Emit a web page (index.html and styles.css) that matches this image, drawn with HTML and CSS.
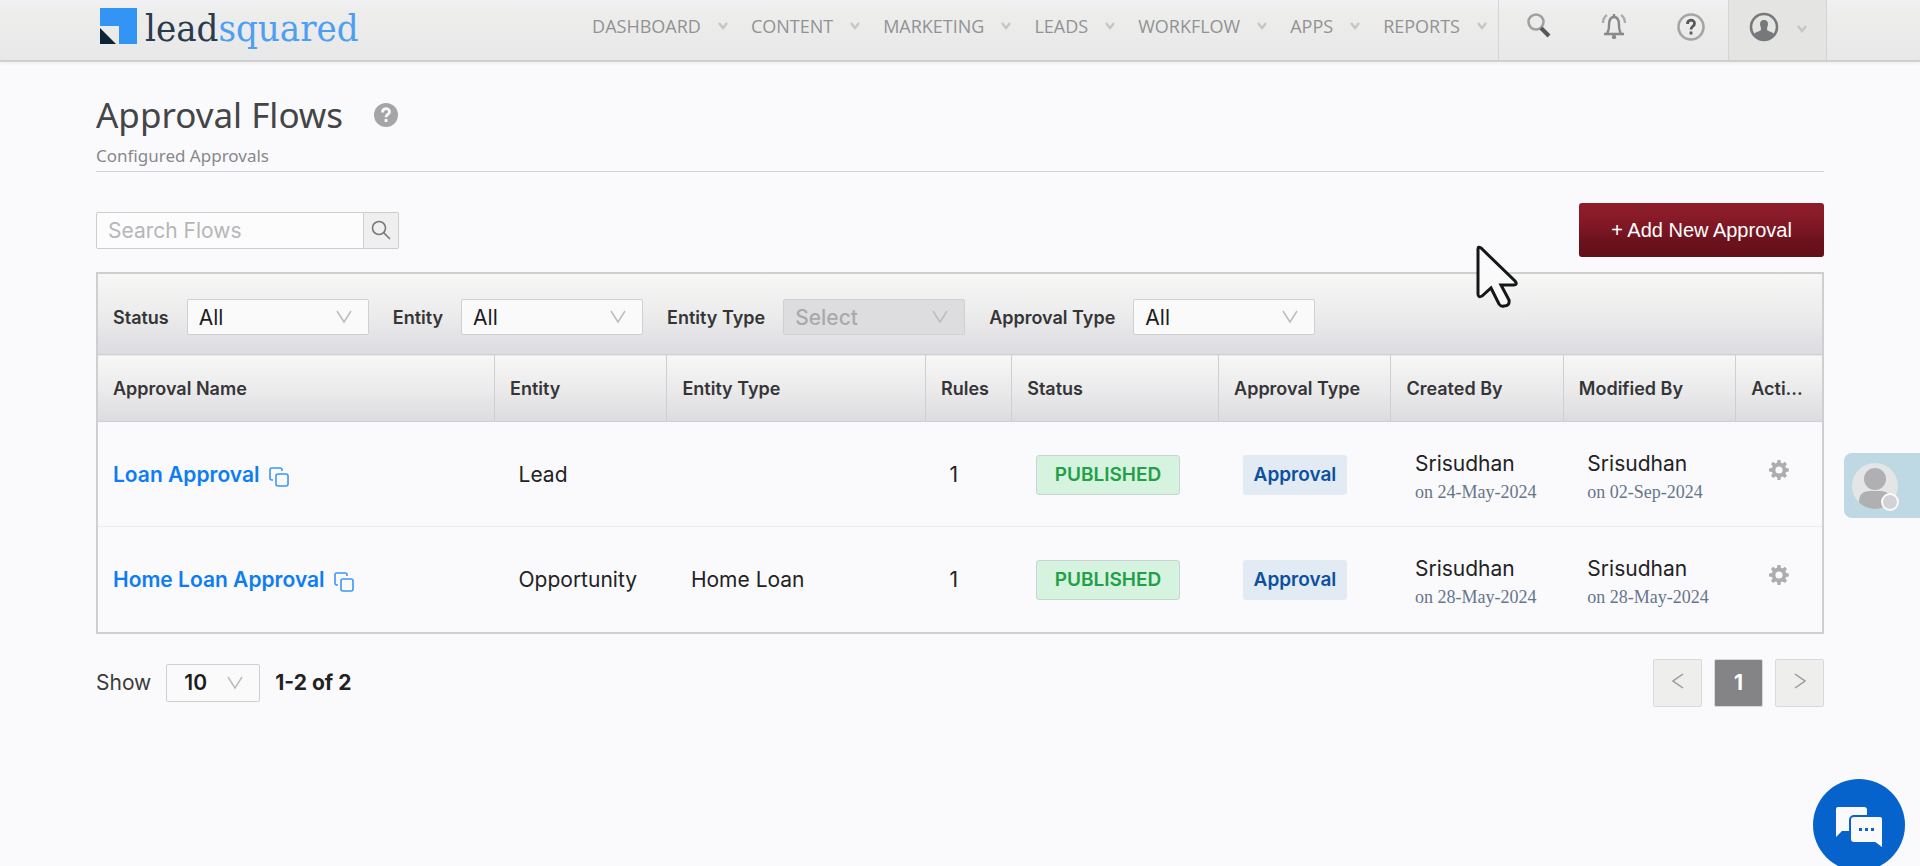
FILE: index.html
```html
<!DOCTYPE html>
<html lang="en">
<head>
    <meta charset="UTF-8">
    <meta name="viewport" content="width=device-width, initial-scale=1.0">
    <title>Approval Flows</title>
    <link rel="stylesheet" href="styles.css">
</head>
<body>

    <!-- Shared icon shapes -->
    <svg class="sprite" aria-hidden="true">
        <symbol id="caret" viewBox="0 0 10 8"><path d="M1 1l4 5 4-5" fill="none" stroke="#c6c6c8" stroke-width="2.4"/></symbol>
        <symbol id="chevron" viewBox="0 0 16 14"><path d="M1 1l7 11 7-11" fill="none" stroke="#bcbcbe" stroke-width="1.5"/></symbol>
        <symbol id="copy" viewBox="0 0 20 20"><g fill="none" stroke="#3d97f7" stroke-width="1.6"><rect x="7" y="7" width="12" height="12" rx="2"/><path d="M4 13H3a2 2 0 0 1-2-2V3a2 2 0 0 1 2-2h8a2 2 0 0 1 2 2v1"/></g></symbol>
        <symbol id="gear" viewBox="0 0 20 20"><path fill-rule="evenodd" fill="#adadb0" d="M8.500 0h3l.4 2.700 1.700.7 2.200-1.600 2.200 2.100-1.600 2.300.7 1.700 2.700.5v3l-2.700.5-.7 1.700 1.600 2.200-2.200 2.200-2.200-1.600-1.700.7-.4 2.900h-3l-.5-2.900-1.600-.7-2.300 1.600L2 15.800l1.600-2.200-.7-1.700-2.900-.5v-3l2.900-.5.7-1.700L2 3.900l2.100-2.100 2.300 1.600 1.600-.7zM10 6.400a3.600 3.600 0 1 0 0 7.200 3.600 3.600 0 0 0 0-7.200z"/></symbol>
    </svg>

    <header class="topbar">
        <a class="logo" href="#" aria-label="leadsquared">
            <svg width="37" height="36" viewBox="0 0 37 36"><path fill="#3294f5" d="M0 0h37v36H19V18H0z"/><path fill="#0c2438" d="M0 20l16 16H0z"/></svg>
            <span class="logo-text">lead<span class="logo-blue">squared</span></span>
        </a>
        <nav class="menu">
            <a href="#">DASHBOARD <svg class="caret"><use href="#caret"/></svg></a>
            <a href="#">CONTENT <svg class="caret"><use href="#caret"/></svg></a>
            <a href="#">MARKETING <svg class="caret"><use href="#caret"/></svg></a>
            <a href="#">LEADS <svg class="caret"><use href="#caret"/></svg></a>
            <a href="#">WORKFLOW <svg class="caret"><use href="#caret"/></svg></a>
            <a href="#">APPS <svg class="caret"><use href="#caret"/></svg></a>
            <a href="#">REPORTS <svg class="caret"><use href="#caret"/></svg></a>
        </nav>
        <div class="tools">
            <button type="button" aria-label="Search">
                <svg width="26" height="26" viewBox="0 0 26 26" fill="none"><circle cx="11" cy="9" r="7.500" stroke="#a0a0a2" stroke-width="2.600"/><path d="M16 15l8 8" stroke="#555759" stroke-width="4"/></svg>
            </button>
            <button type="button" aria-label="Notifications">
                <svg width="26" height="26" viewBox="0 0 26 26" fill="none" stroke="#88898b" stroke-width="2.400"><path d="M3 21h20M6 20c2-2 2-4 2-8 0-5 2-8 5-8s5 3 5 8c0 4 0 6 2 8M13 1v3"/><path d="M6 2C3 4 2 7 2 10M20 2c3 2 4 5 4 8" stroke="#acadb0"/><circle cx="13" cy="24" r="1"/></svg>
            </button>
            <button type="button" aria-label="Help">
                <svg width="28" height="28" viewBox="0 0 28 28" fill="none"><circle cx="14" cy="14" r="12.500" stroke="#a4a5a7" stroke-width="2.600"/><path d="M10.500 11c0-5 7-5 7-.5 0 3-3.500 2.500-3.500 6M14 18.500v3" stroke="#58595b" stroke-width="2.800"/></svg>
            </button>
        </div>
        <button type="button" class="account" aria-label="Account">
            <svg width="30" height="30" viewBox="0 0 30 30"><circle cx="15" cy="15" r="13" fill="none" stroke="#77787b" stroke-width="2.600"/><path fill="#77787b" d="M15 8c3 0 4 2 4 4 0 2-1 3-1 5 0 3 5 2 7 5-5 8-15 8-20 0 2-3 7-2 7-5 0-2-1-3-1-5 0-2 1-4 4-4z"/></svg>
            <svg class="caret"><use href="#caret"/></svg>
        </button>
    </header>

    <main class="page">
        <div class="page-title">
            <h1>Approval Flows</h1>
            <svg width="24" height="24" viewBox="0 0 24 24" fill="none"><circle cx="12" cy="12" r="12" fill="#a5a5a8"/><path d="M8.500 9.500c0-5 7-5 7-.5 0 2.500-3.500 2.500-3.500 5.200M12 16v3" stroke="#fafafc" stroke-width="2.800"/></svg>
        </div>
        <p class="subtitle">Configured Approvals</p>

        <div class="actions">
            <form class="search">
                <input type="text" placeholder="Search Flows" aria-label="Search Flows">
                <button type="button" aria-label="Search">
                    <svg width="20" height="20" viewBox="0 0 20 20" fill="none" stroke="#77777a" stroke-width="1.600"><circle cx="8" cy="8" r="6.500"/><path d="M12.500 12.500L19 19"/></svg>
                </button>
            </form>
            <button type="button" class="add-btn">+ Add New Approval</button>
        </div>

        <section class="grid-box">
            <div class="filters">
                <label for="status">Status</label>
                <div class="select">
                    <select id="status"><option>All</option></select>
                    <svg class="chevron"><use href="#chevron"/></svg>
                </div>
                <label for="entity">Entity</label>
                <div class="select">
                    <select id="entity"><option>All</option></select>
                    <svg class="chevron"><use href="#chevron"/></svg>
                </div>
                <label for="entityType">Entity Type</label>
                <div class="select">
                    <select id="entityType" disabled><option>Select</option></select>
                    <svg class="chevron"><use href="#chevron"/></svg>
                </div>
                <label for="approvalType">Approval Type</label>
                <div class="select">
                    <select id="approvalType"><option>All</option></select>
                    <svg class="chevron"><use href="#chevron"/></svg>
                </div>
            </div>

            <table class="flows">
                <colgroup>
                    <col class="col-name">
                    <col class="col-medium">
                    <col class="col-type">
                    <col class="col-small">
                    <col class="col-status">
                    <col class="col-medium">
                    <col class="col-medium">
                    <col class="col-medium">
                    <col>
                </colgroup>
                <thead>
                    <tr>
                        <th>Approval Name</th>
                        <th>Entity</th>
                        <th>Entity Type</th>
                        <th>Rules</th>
                        <th>Status</th>
                        <th>Approval Type</th>
                        <th>Created By</th>
                        <th>Modified By</th>
                        <th>Acti...</th>
                    </tr>
                </thead>
                <tbody>
                    <tr>
                        <td><div class="name"><a href="#">Loan Approval</a><svg class="copy"><use href="#copy"/></svg></div></td>
                        <td>Lead</td>
                        <td></td>
                        <td>1</td>
                        <td><span class="badge published">PUBLISHED</span></td>
                        <td><span class="badge type">Approval</span></td>
                        <td class="person">Srisudhan<span class="date">on 24-May-2024</span></td>
                        <td class="person">Srisudhan<span class="date">on 02-Sep-2024</span></td>
                        <td class="action"><button type="button" aria-label="Actions"><svg class="gear"><use href="#gear"/></svg></button></td>
                    </tr>
                    <tr>
                        <td><div class="name"><a href="#">Home Loan Approval</a><svg class="copy"><use href="#copy"/></svg></div></td>
                        <td>Opportunity</td>
                        <td>Home Loan</td>
                        <td>1</td>
                        <td><span class="badge published">PUBLISHED</span></td>
                        <td><span class="badge type">Approval</span></td>
                        <td class="person">Srisudhan<span class="date">on 28-May-2024</span></td>
                        <td class="person">Srisudhan<span class="date">on 28-May-2024</span></td>
                        <td class="action"><button type="button" aria-label="Actions"><svg class="gear"><use href="#gear"/></svg></button></td>
                    </tr>
                </tbody>
            </table>
        </section>

        <footer class="pager">
            <label for="pageSize">Show</label>
            <div class="select page-size">
                <select id="pageSize"><option>10</option></select>
                <svg class="chevron"><use href="#chevron"/></svg>
            </div>
            <strong>1-2 of 2</strong>
            <div class="pages">
                <button type="button" aria-label="Previous"><svg width="12" height="16" viewBox="0 0 12 16"><path d="M11 1L1 8l10 7" fill="none" stroke="#98989b" stroke-width="1.500"/></svg></button>
                <button type="button" class="current">1</button>
                <button type="button" aria-label="Next"><svg width="12" height="16" viewBox="0 0 12 16"><path d="M1 1l10 7-10 7" fill="none" stroke="#98989b" stroke-width="1.500"/></svg></button>
            </div>
        </footer>
    </main>

    <!-- Floating items -->
    <button type="button" class="agent" aria-label="Agent status">
        <svg width="52" height="52" viewBox="0 0 52 52"><defs><clipPath id="face"><circle cx="25" cy="25" r="23"/></clipPath></defs><circle cx="25" cy="25" r="23" fill="#e4e5e6"/><g clip-path="url(#face)" fill="#b0b0b3"><circle cx="25" cy="18" r="11"/><path d="M9 48V41q0-11 11-11h10q11 0 11 11v7z"/></g><circle cx="40" cy="41" r="8" fill="#d2d2d5" stroke="#fafafc" stroke-width="2"/></svg>
    </button>

    <button type="button" class="chat" aria-label="Chat">
        <svg width="50" height="46" viewBox="0 0 50 46"><path fill="#fafafc" d="M4 2h26a3 3 0 0 1 3 3v21H8l-6 6V4a2 2 0 0 1 2-2z"/><path fill="#fafafc" stroke="#0663cc" stroke-width="2" d="M20 11h26a3 3 0 0 1 3 3v30l-8-6H20a4 4 0 0 1-4-4V15a4 4 0 0 1 4-4z"/><path fill="#0663cc" d="M25 23h3v3h-3zM31 23h3v3h-3zM37 23h3v3h-3z"/></svg>
    </button>

    <svg class="pointer" width="42" height="64" viewBox="0 0 42 64" aria-hidden="true"><path d="M2 4Q2 1 5 3L39 36Q42 40 38 40H25L33 55Q34 61 28 61Q25 62 23 59L15 43L6 51Q2 53 2 49z" fill="#fafafa" stroke="#151719" stroke-width="3"/></svg>

</body>
</html>
```
FILE: styles.css
```css
* {
    box-sizing: border-box;
}

body {
    font-family: Inter, "Liberation Sans", sans-serif;
    font-size: 21px;
    color: #222224;
    background-color: #fafafc;
    margin: 0;
    min-height: 100vh;
}

a {
    text-decoration: none;
}

button {
    font-family: inherit;
    cursor: pointer;
    padding: 0;
    border: none;
    background: none;
}

svg {
    flex: none;
}

.sprite {
    display: none;
}

/* Top bar */
.topbar {
    display: flex;
    align-items: stretch;
    height: 62px;
    padding: 0 93px 0 100px;
    background: linear-gradient(#f1f1f3, #ededeb 20%, #e8e8ea);
    border-bottom: 2px solid #cfcfcf;
    box-shadow: 0 2px 3px #f1f1f1;
}

.logo {
    display: flex;
    align-items: flex-start;
    gap: 8px;
    padding-top: 8px;
}

.logo-text {
    font-family: "DejaVu Serif Condensed", "DejaVu Serif", serif;
    font-size: 38px;
    line-height: 40px;
    color: #2a3b4d;
}

.logo-blue {
    color: #4c9ff2;
}

.menu {
    display: flex;
    gap: 23px;
    margin-left: auto;
    padding-right: 11px;
}

.menu a {
    display: flex;
    align-items: center;
    gap: 17px;
    height: 52px;
    font-family: "Open Sans", "Noto Sans", sans-serif;
    font-size: 18px;
    color: #929294;
}

.caret {
    width: 10px;
    height: 8px;
}

.tools {
    display: flex;
    align-items: flex-start;
    justify-content: space-between;
    width: 230px;
    padding: 13px 23px 0 26px;
    border-left: 1px solid #d2d5d6;
}

.account {
    display: flex;
    align-items: flex-start;
    justify-content: center;
    gap: 18px;
    width: 99px;
    padding-top: 12px;
    border: solid #d2d5d6;
    border-width: 0 1px;
    background-color: #e4e4e3;
}

.account .caret {
    margin-top: 13px;
}

/* Page heading */
.page {
    padding: 28px 96px 0;
}

.page-title {
    display: flex;
    align-items: center;
    gap: 31px;
}

h1 {
    font-family: "Noto Sans", "Open Sans", sans-serif;
    font-size: 35px;
    font-weight: normal;
    line-height: 50px;
    margin: 0;
    color: #454547;
}

.subtitle {
    font-family: "Noto Sans", "Open Sans", sans-serif;
    font-size: 17px;
    line-height: 31px;
    margin: 0;
    color: #88888b;
    border-bottom: 1px solid #d3d3d7;
}

.actions {
    display: flex;
    align-items: center;
    justify-content: space-between;
    margin-top: 31px;
}

.search {
    display: flex;
}

.search input {
    width: 268px;
    height: 37px;
    padding: 0 11px;
    font-family: inherit;
    font-size: 21px;
    border: 1px solid #cdcdd0;
    border-radius: 2px 0 0 2px;
    background-color: #fcfcfd;
}

.search input::placeholder {
    color: #b6b6b9;
}

.search button {
    display: flex;
    align-items: center;
    justify-content: center;
    width: 35px;
    border: 1px solid #cdcdd0;
    border-left: none;
    border-radius: 0 2px 2px 0;
    background-color: #efefef;
}

.add-btn {
    width: 245px;
    height: 54px;
    font-family: "Liberation Sans", Arial, sans-serif;
    font-size: 20px;
    color: #fff;
    border-radius: 3px;
    background: linear-gradient(#8e1d2b, #871a27 30%, #6c121d 70%, #630e19);
}

/* Filters and table */
.grid-box {
    margin-top: 15px;
    border: 2px solid #cfcfd3;
}

.filters {
    display: flex;
    align-items: center;
    height: 80px;
    padding: 6px 15px 0;
    background: linear-gradient(#f7f7f6, #ececec 50%, #dcdce1);
}

.filters label {
    font-size: 18px;
    font-weight: 600;
    color: #353537;
    margin-right: 18px;
}

.select {
    position: relative;
    width: 182px;
    margin-right: 24px;
}

.select select {
    appearance: none;
    width: 100%;
    height: 36px;
    padding: 0 11px;
    font-family: inherit;
    font-size: 21px;
    color: #1c1c1e;
    border: 1px solid #cfcfd4;
    border-radius: 2px;
    background-color: #fafafb;
}

.select select:disabled {
    font-weight: 500;
    color: #a9a9ac;
    background-color: #dddde0;
    opacity: 1;
}

.chevron {
    position: absolute;
    top: 50%;
    right: 17px;
    width: 16px;
    height: 14px;
    margin-top: -7px;
    pointer-events: none;
}

.flows {
    width: 100%;
    table-layout: fixed;
    border-collapse: collapse;
}

.col-name {
    width: 23%;
}

.col-medium {
    width: 10%;
}

.col-type {
    width: 15%;
}

.col-small {
    width: 5%;
}

.col-status {
    width: 12%;
}

th {
    height: 67px;
    padding: 0 15px;
    font-size: 18px;
    font-weight: 600;
    text-align: left;
    white-space: nowrap;
    color: #353537;
    border: 1px solid #cfcfd3;
    background: linear-gradient(#f7f7f6, #ebebec 50%, #dcdce0);
}

th:first-child {
    border-left: none;
}

th:last-child {
    border-right: none;
}

td {
    height: 105px;
    padding: 2px 24px 0;
    line-height: 28px;
    border-bottom: 1px solid #ebebea;
}

tr:last-child td {
    border-bottom: none;
}

td:first-child {
    padding: 2px 15px 0;
}

.name {
    display: flex;
    align-items: center;
    gap: 9px;
}

.name a {
    font-weight: 600;
    color: #0d7df5;
}

.copy {
    width: 20px;
    height: 20px;
    margin-top: 4px;
}

.badge {
    display: inline-block;
    font-size: 19px;
    font-weight: 600;
    line-height: 38px;
    border-radius: 3px;
}

.published {
    padding: 0 18px;
    color: #21a047;
    border: 1px solid #c8d3d3;
    background-color: #d5f3df;
}

.type {
    padding: 1px 11px;
    color: #0c509e;
    background-color: #e2eaf3;
}

.person {
    padding-top: 7px;
}

.date {
    display: block;
    font-family: "Liberation Serif", "Times New Roman", serif;
    font-size: 18px;
    color: #66758a;
}

td.action {
    padding: 0 33px;
}

.action button {
    display: block;
    margin-bottom: 9px;
}

.gear {
    display: block;
    width: 20px;
    height: 20px;
}

/* Pager */
.pager {
    display: flex;
    align-items: center;
    margin-top: 25px;
}

.pager label {
    color: #3a3a3c;
}

.page-size {
    width: 94px;
    margin: 0 15px;
}

.page-size select {
    height: 38px;
    padding: 0 17px;
    font-weight: 600;
}

.pager strong {
    font-weight: bold;
}

.pages {
    display: flex;
    gap: 12px;
    margin-left: auto;
}

.pages button {
    width: 49px;
    height: 48px;
    border: 1px solid #d9d9dc;
    border-radius: 2px;
    background-color: #eeeeed;
}

.pages .current {
    font-size: 21px;
    font-weight: bold;
    color: #fff;
    background-color: #848487;
}

/* Floating items */
.agent {
    position: fixed;
    top: 453px;
    right: 0;
    width: 76px;
    height: 65px;
    padding: 6px 0 0 6px;
    text-align: left;
    border-radius: 8px 0 0 8px;
    background-color: #bed8e4;
}

.chat {
    position: fixed;
    right: 15px;
    bottom: -5px;
    display: flex;
    align-items: center;
    justify-content: center;
    width: 92px;
    height: 92px;
    padding-top: 6px;
    border-radius: 50%;
    background-color: #0663cc;
}

.pointer {
    position: absolute;
    top: 245px;
    left: 1476px;
}
```
